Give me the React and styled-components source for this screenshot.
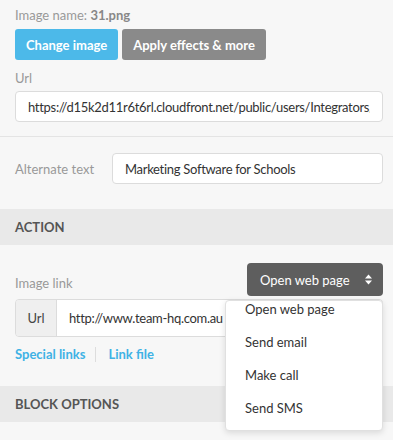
import React from "react";
import styled, { createGlobalStyle } from "styled-components";

const GlobalStyle = createGlobalStyle`
 html, body {
  margin: 0;
  padding: 0;
  background: #f7f7f7;
  font-family: Lato, "Open Sans", sans-serif;
  font-size: 13px;
  color: #444;
 }
`;

const menuOptions = ["Open web page", "Send email", "Make call", "Send SMS"];

export default function App() {
 return (
  <Panel>
   <GlobalStyle />
   {/* Image source */}
   <Section>
    <Caption>
     Image name: <strong>31.png</strong>
    </Caption>
    <ButtonRow>
     <Button $variant="primary">Change image</Button>
     <Button>Apply effects &amp; more</Button>
    </ButtonRow>
    <FieldLabel>Url</FieldLabel>
    <TextInput readOnly value="https://d15k2d11r6t6rl.cloudfront.net/public/users/Integrators/d0a1b2c3" />
   </Section>

   {/* Alt text */}
   <InlineRow>
    <InlineLabel>Alternate text</InlineLabel>
    <TextInput readOnly value="Marketing Software for Schools" />
   </InlineRow>

   <SectionHeader>Action</SectionHeader>

   <ActionSection>
    <LinkRow>
     <FieldLabel>Image link</FieldLabel>
     <SelectWrap>
      <SelectButton>
       Open web page
       <svg width="9" height="13" viewBox="0 0 9 13">
        <path d="M4.5 1.5 L8 5.5 H1 Z M4.5 11.5 L8 7.5 H1 Z" fill="#fff" />
       </svg>
      </SelectButton>
      <Menu>
       {menuOptions.map((option) => (
        <MenuItem key={option}>{option}</MenuItem>
       ))}
      </Menu>
     </SelectWrap>
    </LinkRow>
    <InputGroup>
     <Addon>Url</Addon>
     <GroupInput readOnly value="http://www.team-hq.com.au" />
    </InputGroup>
    <Links>
     <TextLink>Special links</TextLink>
     <TextLink>Link file</TextLink>
    </Links>
   </ActionSection>

   <SectionHeader>Block options</SectionHeader>
  </Panel>
 );
}

const Panel = styled.div`
 width: 393px;
 height: 440px;
 overflow: hidden;
 background: #f7f7f7;
`;

const Section = styled.div`
 padding: 7px 10px 14px 15px;
 border-bottom: 1px solid #e4e4e4;
`;

const Caption = styled.div`
 color: #999;
 font-size: 13px;
 line-height: 16px;

 strong {
  color: #888;
  font-weight: 700;
 }
`;

const ButtonRow = styled.div`
 display: flex;
 gap: 4px;
 margin-top: 6px;
`;

const Button = styled.button`
 height: 31px;
 padding: 0 11px;
 border: none;
 border-radius: 3px;
 font-family: inherit;
 font-size: 13px;
 font-weight: 700;
 color: #fff;
 background: ${({ $variant }) => ($variant === "primary" ? "#4cb9e9" : "#8a8a8a")};
`;

const FieldLabel = styled.div`
 color: #999;
 font-size: 13px;
 line-height: 18px;
 margin: 9px 0 4px;
`;

const TextInput = styled.input`
 box-sizing: border-box;
 width: 100%;
 height: 31px;
 padding: 0 12px;
 border: 1px solid #dcdcdc;
 border-radius: 4px;
 background: #fff;
 font-family: inherit;
 font-size: 13px;
 letter-spacing: -0.3px;
 color: #333;
 outline: none;
`;

const InlineRow = styled.div`
 display: flex;
 align-items: center;
 padding: 16px 10px 25px 15px;
`;

const InlineLabel = styled.div`
 flex: 0 0 97px;
 color: #999;
 font-size: 13px;
`;

const SectionHeader = styled.div`
 height: 36px;
 display: flex;
 align-items: center;
 padding-left: 15px;
 background: #e9e9e9;
 text-transform: uppercase;
 font-weight: 700;
 font-size: 13px;
 color: #555;
`;

const ActionSection = styled.div`
 padding: 18px 10px 24px 15px;
`;

const LinkRow = styled.div`
 display: flex;
 justify-content: space-between;
 align-items: flex-end;

 ${FieldLabel} {
  margin: 0 0 4px;
 }
`;

const SelectWrap = styled.div`
 position: relative;
`;

const SelectButton = styled.div`
 box-sizing: border-box;
 width: 136px;
 height: 33px;
 display: flex;
 align-items: center;
 justify-content: space-between;
 padding: 0 10px 0 13px;
 border-radius: 4px;
 background: #5e5e5e;
 color: #fff;
 font-size: 13px;
`;

const Menu = styled.div`
 position: absolute;
 right: 0;
 top: 37px;
 width: 158px;
 box-sizing: border-box;
 background: #fff;
 border: 1px solid #e0e0e0;
 border-radius: 4px;
 box-shadow: 0 2px 6px rgba(0, 0, 0, 0.12);
 z-index: 5;
`;

const MenuItem = styled.div`
 height: 33px;
 line-height: 17px;
 padding-left: 19px;
 color: #333;
 font-size: 13px;

 &:last-child {
  height: 30px;
 }
`;

const InputGroup = styled.div`
 display: flex;
 height: 38px;
 margin-top: 3px;
 border: 1px solid #dcdcdc;
 border-radius: 4px;
 overflow: hidden;
 box-sizing: border-box;
`;

const Addon = styled.div`
 width: 40px;
 display: flex;
 align-items: center;
 justify-content: center;
 background: #efefef;
 border-right: 1px solid #dcdcdc;
 color: #444;
`;

const GroupInput = styled.input`
 flex: 1;
 border: none;
 padding: 0 12px;
 font-family: inherit;
 font-size: 13px;
 letter-spacing: -0.3px;
 color: #333;
 outline: none;
`;

const Links = styled.div`
 display: flex;
 margin-top: 10px;
`;

const TextLink = styled.a`
 color: #3fb2e5;
 font-weight: 700;
 font-size: 13px;
 line-height: 15px;
 padding-right: 10px;

 & + & {
  padding-left: 12px;
  border-left: 1px solid #ddd;
 }
`;
